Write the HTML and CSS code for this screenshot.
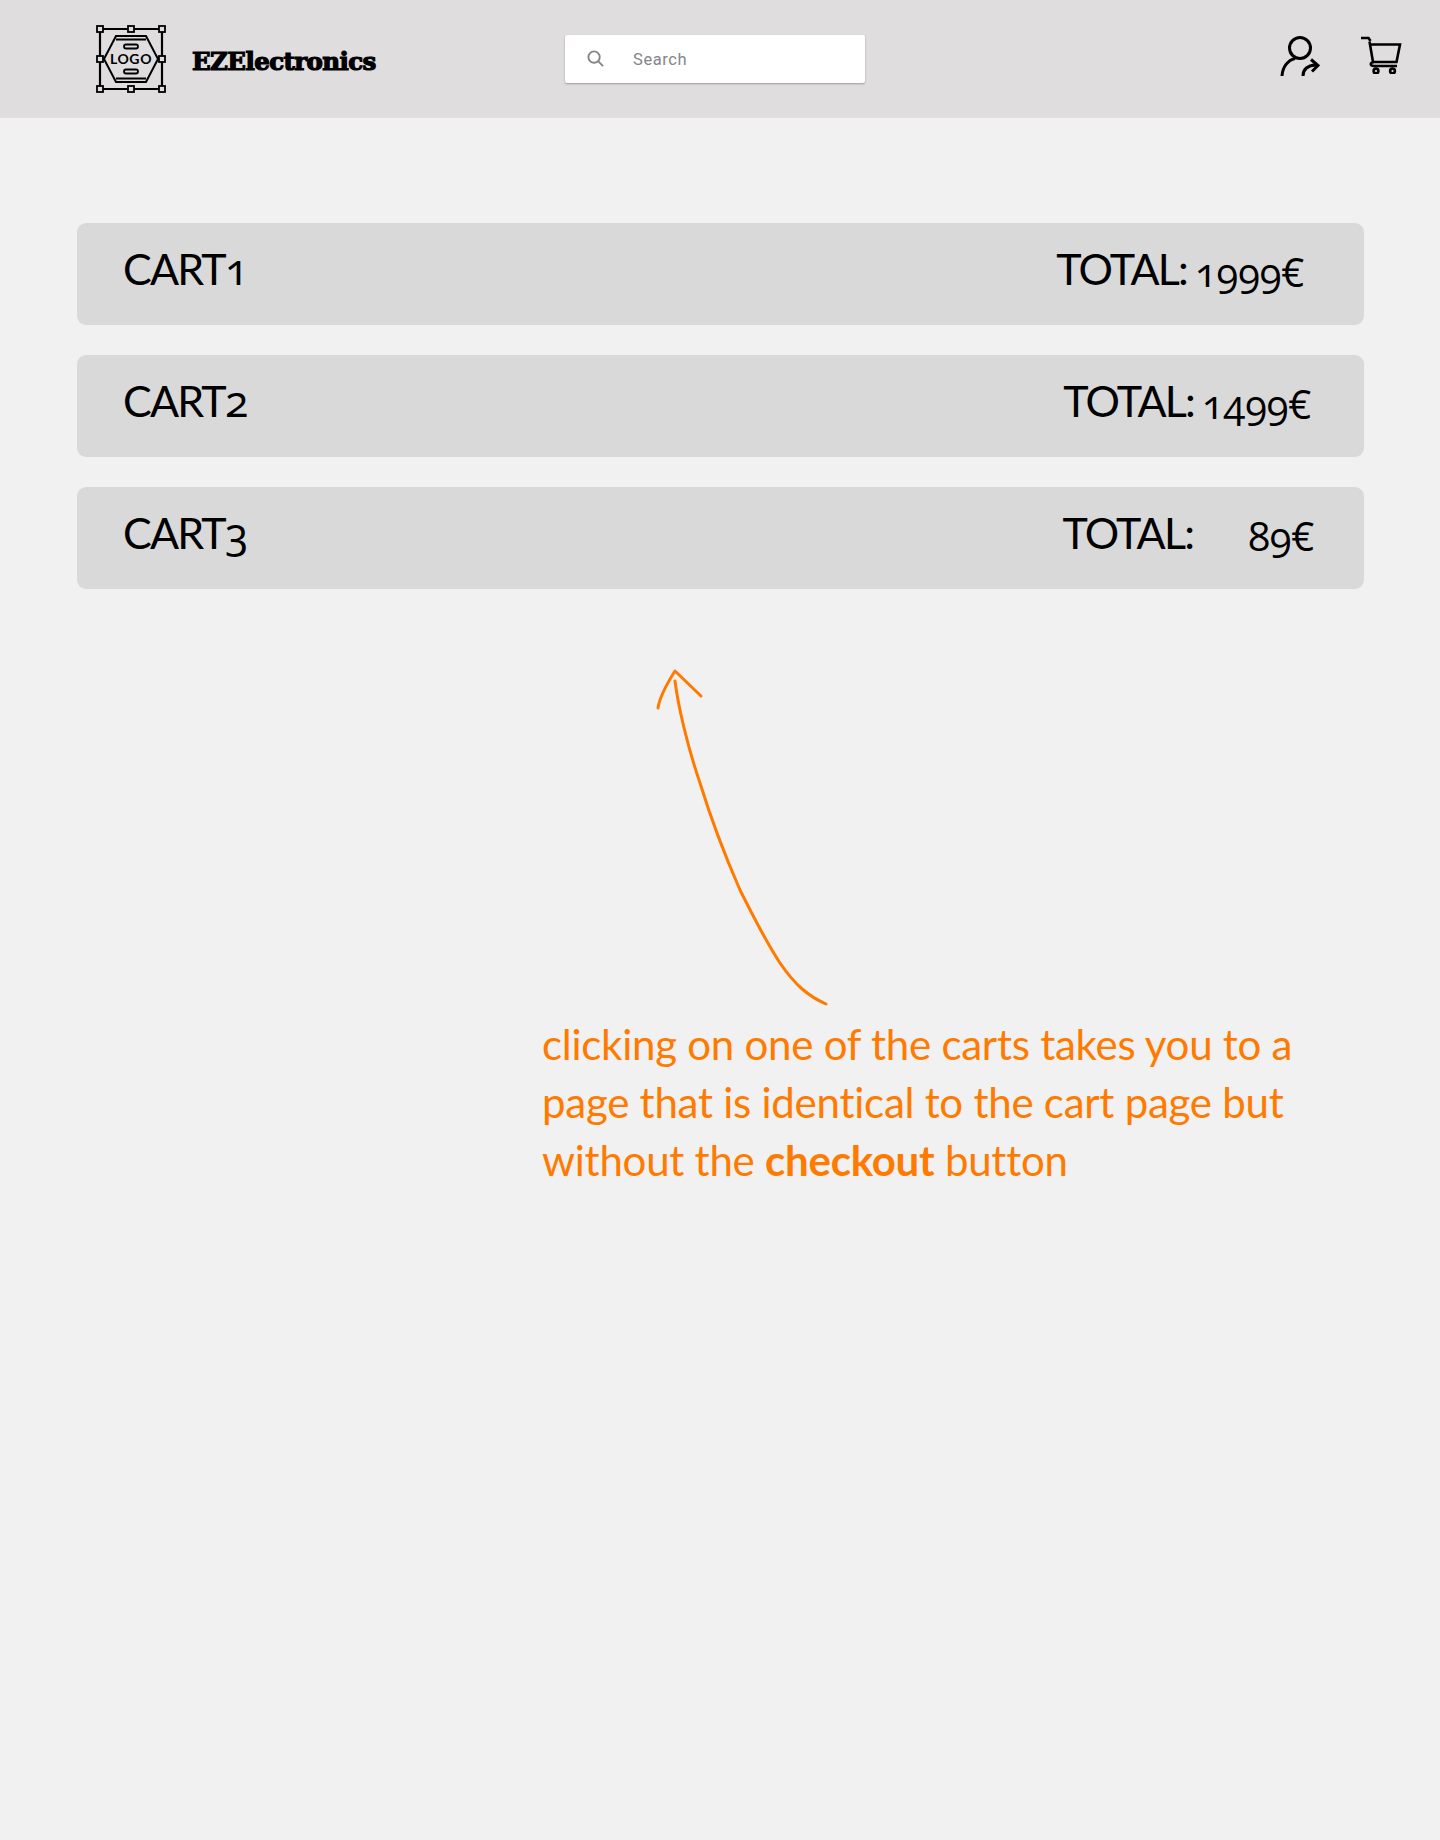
FILE: index.html
```html
<!DOCTYPE html>
<html lang="en">
<head>
<meta charset="utf-8">
<title>EZElectronics</title>
<link rel="stylesheet" href="styles.css">
</head>
<body>
<header class="topbar">
  <div class="brand">
    <svg class="logo" viewBox="0 0 70 68" fill="none" stroke="#000" stroke-width="2.200">
      <path d="M4 4H66V64H4Z"/>
      <g fill="#dfddde" stroke-width="1.8">
        <rect x="1" y="1" width="6" height="6"/><rect x="32" y="1" width="6" height="6"/><rect x="63" y="1" width="6" height="6"/>
        <rect x="1" y="31" width="6" height="6"/><rect x="63" y="31" width="6" height="6"/>
        <rect x="1" y="61" width="6" height="6"/><rect x="32" y="61" width="6" height="6"/><rect x="63" y="61" width="6" height="6"/>
      </g>
      <path d="M8 34L20 11H50L62 34L50 57H20Z" stroke-width="2"/>
      <path d="M20 14.500H50M20 53.500H50" stroke-width="1.800"/>
      <rect x="28" y="19.500" width="14" height="4" rx="2" stroke-width="1.800"/>
      <rect x="28" y="44.500" width="14" height="4" rx="2" stroke-width="1.800"/>
      <text x="35" y="39" class="logo-word">LOGO</text>
    </svg>
    <span class="brand-name">EZElectronics</span>
  </div>
  <label class="search">
    <svg class="search-icon" viewBox="0 0 18 18" fill="none" stroke="#85858a" stroke-width="2">
      <circle cx="7.500" cy="7.500" r="6"/><path d="M12 12L17 17"/>
    </svg>
    <span class="search-text">Search</span>
  </label>
  <div class="actions">
    <svg class="user-icon" viewBox="0 0 40 42" fill="none" stroke="#000" stroke-width="3">
      <circle cx="20" cy="13" r="10.500"/>
      <path d="M2 41C2.500 32 8 25 15 23.500"/>
      <path d="M23 41C23 34 27 30.500 36 30"/>
      <path d="M31 24.500L38 30.500L32 36.500"/>
    </svg>
    <svg class="cart-icon" viewBox="0 0 42 38" fill="none" stroke="#000" stroke-width="2.600">
      <path d="M1 2H8.500L10.500 5"/>
      <path d="M9 8.500H40L36.500 26H13L9.500 5.500"/>
      <path d="M14 26C9.500 26.500 10 30 14 30H37"/>
      <circle cx="16" cy="35" r="2.400"/><circle cx="32.500" cy="35" r="2.400"/>
    </svg>
  </div>
</header>
<main class="page">
  <section class="carts">
    <article class="cart cart-first">
      <h2 class="cart-name">CART<span class="num">1</span></h2>
      <p class="total"><span class="total-label">TOTAL:</span><span class="total-value num">1999€</span></p>
    </article>
    <article class="cart cart-second">
      <h2 class="cart-name">CART<span class="num">2</span></h2>
      <p class="total"><span class="total-label">TOTAL:</span><span class="total-value num">1499€</span></p>
    </article>
    <article class="cart cart-third">
      <h2 class="cart-name">CART<span class="num">3</span></h2>
      <p class="total"><span class="total-label">TOTAL:</span><span class="total-value num">89€</span></p>
    </article>
  </section>
  <svg class="arrow" viewBox="650 665 180 345" fill="none" stroke="#ff7a00" stroke-width="3" stroke-linecap="round" stroke-linejoin="round">
    <path d="M658 708C660 695 668 682 675 671L701 696"/>
    <path d="M675 681C678 705 687 745 700 783C712 822 726 858 740 890C755 920 768 945 780 963C795 985 808 996 826 1004"/>
  </svg>
  <p class="note">clicking on one of the carts takes you to a<br>page that is identical to the cart page but<br>without the <strong>checkout</strong> button</p>
</main>
</body>
</html>
```
FILE: styles.css
```css
* { box-sizing: border-box; }
html, body { margin: 0; }
body {
  width: 1440px;
  height: 1840px;
  background: #f1f1f1;
  font-family: "Lato", "Open Sans", sans-serif;
  color: #000;
  overflow: hidden;
}
.topbar {
  height: 118px;
  background: #dfddde;
  display: flex;
  align-items: center;
  padding: 0 38px 0 96px;
}
.brand { display: flex; align-items: center; gap: 26px; width: 469px; }
.logo { width: 70px; height: 68px; flex: none; }
.logo-word {
  font-family: "Lato", sans-serif;
  font-size: 14px;
  font-weight: 700;
  text-anchor: middle;
  fill: #000;
  stroke: none;
  letter-spacing: 0.6px;
}
.brand-name {
  font-family: "DejaVu Serif", serif;
  font-weight: 700;
  font-size: 24.5px;
  letter-spacing: -0.6px;
  -webkit-text-stroke: 1.2px #000;
  padding-top: 4px;
}
.search {
  width: 300px;
  height: 48px;
  background: #fff;
  border-radius: 2px;
  box-shadow: 0 1px 2px rgba(0,0,0,0.3);
  display: flex;
  align-items: center;
  padding-left: 22px;
  gap: 29px;
  margin-top: -1px;
}
.search-icon { width: 17px; height: 17px; flex: none; }
.search-text {
  font-family: Roboto, sans-serif;
  font-size: 16.500px;
  color: #85858a;
  letter-spacing: 0.6px;
  padding-top: 1px;
}
.actions { margin-left: auto; display: flex; align-items: center; gap: 40px; margin-top: -6px; }
.user-icon { width: 40px; height: 42px; }
.cart-icon { width: 42px; height: 38px; margin-top: -3px; }
.page { padding: 105px 76px 0 77px; }
.carts { display: flex; flex-direction: column; gap: 30px; }
.cart {
  height: 102px;
  background: #d9d9d9;
  border-radius: 9px;
  display: flex;
  justify-content: space-between;
  align-items: flex-start;
  padding: 18px 0 0 46px;
  font-size: 43px;
  line-height: 56px;
  letter-spacing: -1.8px;
}
.num {
  font-family: "Open Sans", sans-serif;
  font-variant-numeric: oldstyle-nums;
  font-weight: 500;
  letter-spacing: -2px;
}
.cart-name { margin: 0; font: inherit; }
.total { margin: 0; display: flex; gap: 8px; }
.cart-first { padding-right: 60px; }
.cart-second { padding-right: 53px; }
.cart-third { padding-right: 50px; }
.cart-third .total { gap: 55px; }
.total-value { font-size: 40px; margin-top: 3px; letter-spacing: -0.2px; }
.arrow { display: block; width: 180px; height: 345px; margin: 76px 0 0 573px; }
.note {
  margin: 5px 0 0 465px;
  width: 800px;
  font-size: 42px;
  line-height: 58px;
  color: #ff7a00;
  letter-spacing: -0.25px;
}
.note strong { font-weight: 700; }
```
